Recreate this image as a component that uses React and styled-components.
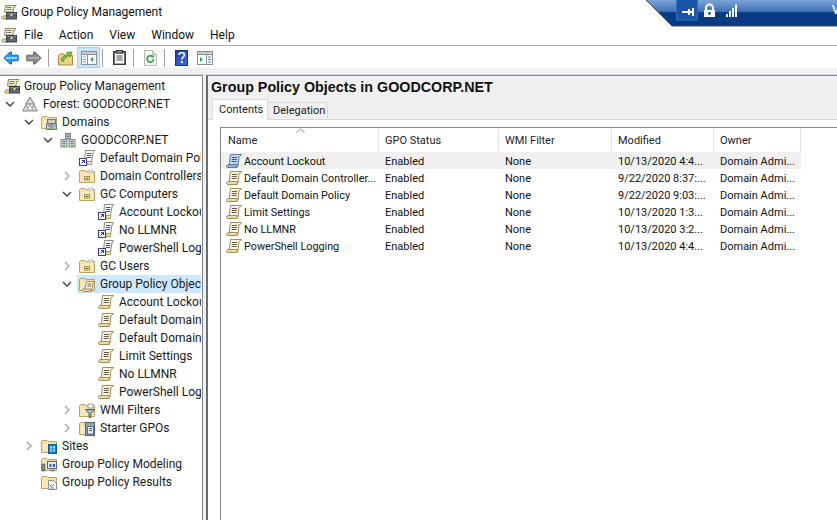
import React from 'react';
import styled, { createGlobalStyle } from 'styled-components';

const GlobalStyle = createGlobalStyle`
  html, body {
    margin: 0;
    padding: 0;
    background: #fff;
    overflow: hidden;
  }
  * { box-sizing: border-box; }
`;

const FONT = `Roboto, "Open Sans", sans-serif`;

const Page = styled.div`
  position: relative;
  width: 837px;
  height: 520px;
  display: flex;
  flex-direction: column;
  overflow: hidden;
  background: #fff;
  color: #1a1a1a;
  font-family: ${FONT};
  font-size: 12px;
`;

const TitleBar = styled.div`
  height: 24px;
  display: flex;
  align-items: center;
  gap: 4px;
  padding-left: 1px;
  color: #111;
`;

const MenuBar = styled.div`
  height: 21px;
  display: flex;
  align-items: center;
  padding-left: 1px;
  border-bottom: 1px solid #a6a6a6;
  box-sizing: content-box;
  color: #111;
`;

const MenuItems = styled.div`
  display: flex;
  gap: 16px;
  margin-left: 7px;
`;

const ToolBar = styled.div`
  height: 22px;
  display: flex;
  align-items: center;
  padding: 1px 0 0 3px;
`;

const ToolButton = styled.div`
  width: ${(p) => p.$w || 16}px;
  height: 21px;
  margin-right: ${(p) => p.$mr || 0}px;
  display: flex;
  align-items: center;
  justify-content: center;
  background: ${(p) => (p.$active ? '#cce4f7' : 'transparent')};
  border: ${(p) => (p.$active ? '1px solid #a8d0ee' : 'none')};
`;

const ToolSep = styled.div`
  width: 1px;
  height: 18px;
  background: #a0a0a0;
  margin: 0 ${(p) => p.$right || 10}px 0 ${(p) => p.$left || 6}px;
`;

const Band = styled.div`
  height: 7px;
  background: #f0f0f0;
  border-bottom: 1px solid #d8d8d8;
`;

const Panes = styled.div`
  flex: 1;
  display: flex;
  background: #f0f0f0;
  min-height: 0;
`;

const TreePane = styled.div`
  width: 203px;
  background: #fff;
  border-top: 1px solid #828790;
  border-right: 1px solid #828790;
  padding-top: 1px;
  overflow: hidden;
`;

const TreeRow = styled.div`
  height: 18px;
  display: flex;
  align-items: center;
  width: 201px;
  padding-left: ${(p) => (p.$root ? 2 : 3 + p.$level * 19)}px;
  overflow: hidden;
  white-space: nowrap;
`;

const Twist = styled.div`
  width: 14px;
  height: 18px;
  flex: none;
  margin-right: 3px;
  display: flex;
  align-items: center;
  justify-content: center;
`;

const TreeItem = styled.div`
  flex: 1;
  min-width: 0;
  height: 18px;
  display: flex;
  align-items: center;
  gap: ${(p) => (p.$tight ? 4 : 5)}px;
  padding-left: 2px;
  background: ${(p) => (p.$selected ? '#cce8ff' : 'transparent')};
  overflow: hidden;

  svg { flex: none; }
`;

const DetailPane = styled.div`
  flex: 1;
  margin-left: 3px;
  border-top: 1px solid #828790;
  border-left: 2px solid #6d6d6d;
  display: flex;
  flex-direction: column;
  min-width: 0;
`;

const DetailHead = styled.div`
  height: 43px;
  background: #f0f0f0;
  padding-left: 3px;
  display: flex;
  flex-direction: column;
  border-bottom: 1px solid #d9d9d9;
  box-sizing: content-box;
`;

const Heading = styled.div`
  font-family: "Liberation Sans", Arial, sans-serif;
  font-weight: bold;
  font-size: 14.3px;
  height: 22px;
  line-height: 23px;
  color: #111;
`;

const Tabs = styled.div`
  flex: 1;
  display: flex;
  align-items: flex-end;
  margin-bottom: -1px;
  margin-left: 1px;
`;

const Tab = styled.div`
  height: ${(p) => (p.$active ? 21 : 18)}px;
  width: ${(p) => p.$w}px;
  background: ${(p) => (p.$active ? '#fff' : '#f0f0f0')};
  border: 1px solid #d9d9d9;
  border-bottom: ${(p) => (p.$active ? 'none' : '1px solid #d9d9d9')};
  border-left: ${(p) => (p.$active ? '1px solid #d9d9d9' : 'none')};
  padding-left: ${(p) => (p.$active ? 6 : 5)}px;
  line-height: ${(p) => (p.$active ? 19 : 16)}px;
  font-size: 11px;
`;

const DetailBody = styled.div`
  flex: 1;
  background: #fff;
  padding: 7px 0 0 12px;
  min-height: 0;
`;

const ListView = styled.div`
  height: 100%;
  border-top: 1px solid #828790;
  border-left: 1px solid #828790;
  font-size: 11px;
`;

const COLUMNS = '158px 120px 113px 102px 87px';

const ListHeader = styled.div`
  display: grid;
  grid-template-columns: ${COLUMNS};
  height: 24px;
  width: 580px;
`;

const HeaderCell = styled.div`
  position: relative;
  border-right: 1px solid #e5e5e5;
  padding: 6px 0 0 ${(p) => (p.$first ? 7 : 6)}px;
  line-height: 14px;
  color: #222;
`;

const SortArrow = styled.svg`
  position: absolute;
  left: 75px;
  top: 0;
`;

const ListRow = styled.div`
  display: grid;
  grid-template-columns: ${COLUMNS};
  height: 17px;
  width: 580px;
  padding-top: 2px;
  align-items: center;
  background: ${(p) => (p.$selected ? '#f0f0f0' : 'transparent')};
  color: #111;
`;

const Cell = styled.div`
  padding-left: 6px;
  white-space: nowrap;
  overflow: hidden;
`;

const NameCell = styled.div`
  display: flex;
  align-items: center;
  gap: 2px;
  height: 15px;
  padding-left: 5px;
  white-space: nowrap;
  font-size: 10.8px;

  svg { flex: none; margin-top: -2px; }
`;

const ConnectionBar = styled.div`
  position: absolute;
  top: 0;
  right: 0;
  width: 191px;
  height: 27px;
`;

const ConnectionLabel = styled.div`
  position: absolute;
  left: 186px;
  top: 3px;
  color: #fff;
  font-size: 12px;
  text-shadow: 0 0 1px #c8b0ff;
`;

/* ---- icons ---- */

const Scroll = ({ blue }) => {
  const fill = blue ? '#c3d6ea' : '#fdf7e0';
  const dark = blue ? '#5a7da3' : '#a08d58';
  const roll = blue ? '#8fb0d2' : '#ecdca8';
  return (
    <svg width="16" height="16" viewBox="0 0 16 16">
      <path d="M4.500 1.500H15.500L14 3.500H13L12 13H3z" fill={fill} stroke={dark} />
      <path d="M.5 13.500C.5 12.300 1.500 11.500 3 11.500h8.500c-.5 1-.5 2-.2 3H2C1 14.500.5 14 .5 13.500z" fill={roll} stroke={dark} />
      <path d="M6 4.500h5M5.800 6.500h5M5.600 8.500h5" stroke={blue ? '#35567c' : '#5a5a5a'} />
    </svg>
  );
};

const ScrollLink = () => (
  <svg width="16" height="16" viewBox="0 0 16 16">
    <path d="M6.500.5H15.500L14 3 12.500 11.500H5.500z" fill="#fafaf6" stroke="#8c8c84" />
    <path d="M8 3.500h4.500M7.800 5.500h4.500M7.600 7.500h4.500" stroke="#555" />
    <path d="M8 11.500h5l-.5 3H8z" fill="#e9e0b8" stroke="#a59a70" />
    <rect x="0.500" y="8.500" width="7" height="7" fill="#fff" stroke="#3c3c8c" />
    <path d="M2.500 13.500l2.500-2.500M3 10.500h2.500V13" stroke="#2a2aa0" fill="none" />
  </svg>
);

const FolderBase = ({ children }) => (
  <>
    <path d="M.5 14.500V3.500L1.500 2.500H6L7 3.500h8.500v11z" fill="#f3dfa8" stroke="#bda260" />
    <path d="M1.500 5.500h13v8h-13z" fill="#f8e8ba" />
    {children}
  </>
);

const Folder = () => (
  <svg width="16" height="16" viewBox="0 0 16 16">
    <FolderBase>
      <rect x="9" y="2" width="4.500" height="2" fill="#eef3f8" stroke="#8fa9c0" strokeWidth=".6" />
      <rect x="5.500" y="8.500" width="5" height="3.500" fill="#e6cf88" stroke="#a8924e" />
      <path d="M7 10.500h2" stroke="#6f6030" />
    </FolderBase>
  </svg>
);

const FolderGpo = () => (
  <svg width="16" height="16" viewBox="0 0 16 16">
    <FolderBase>
      <path d="M7.500 5.500H15.500L14 7.500 13 13.500H5.500z" fill="#fdf8e4" stroke="#a08d58" />
      <path d="M4.500 15.500c-.8 0-1.500-.6-1.500-1.300s.7-1.200 1.500-1.200H12v2.500z" fill="#ecdca8" stroke="#a08d58" />
      <path d="M8.500 8h4M8.200 10h4" stroke="#666" />
    </FolderBase>
  </svg>
);

const FolderFilter = () => (
  <svg width="16" height="16" viewBox="0 0 16 16">
    <FolderBase>
      <rect x="9" y="2" width="5" height="4" fill="#f4f4f4" stroke="#888" strokeWidth=".7" />
      <path d="M6.500 7.500h9l-3.500 4V15.500H10V11.500z" fill="#a9b6c2" stroke="#55636f" />
    </FolderBase>
  </svg>
);

const FolderStarter = () => (
  <svg width="16" height="16" viewBox="0 0 16 16">
    <FolderBase>
      <rect x="6.500" y="2.500" width="9" height="13" fill="#8ea4b8" stroke="#4e5f70" />
      <rect x="8.500" y="6.500" width="6" height="7.500" fill="#dfe8f0" stroke="#56708a" />
      <path d="M10 8.500h3M10 10.500h3" stroke="#3a5a7a" />
    </FolderBase>
  </svg>
);

const FolderSites = () => (
  <svg width="16" height="16" viewBox="0 0 16 16">
    <FolderBase>
      <rect x="7.500" y="6.500" width="8" height="9" fill="#1c7fd0" stroke="#0d5da0" />
      <path d="M9 8.500h2v2H9zM12 8.500h2v2h-2zM9 11.500h2v2H9zM12 11.500h2v2h-2z" fill="#bfe4ff" />
    </FolderBase>
  </svg>
);

const FolderModeling = () => (
  <svg width="16" height="16" viewBox="0 0 16 16">
    <FolderBase>
      <rect x="1" y="8" width="3" height="7" fill="#7d8a94" stroke="#555" strokeWidth=".6" />
      <circle cx="2.500" cy="13" r=".8" fill="#49c24a" />
      <rect x="6.500" y="5.500" width="9" height="7" fill="#e4edf5" stroke="#5a6874" />
      <path d="M8.500 8h2v3h-2zM12 8h2v3h-2z" fill="#2e5f9c" />
      <path d="M9 14.500h5" stroke="#6b7883" strokeWidth="1.500" />
    </FolderBase>
  </svg>
);

const FolderResults = () => (
  <svg width="16" height="16" viewBox="0 0 16 16">
    <FolderBase>
      <path d="M7.500 6.500h5l3 3v6h-8z" fill="#f6f8fb" stroke="#7f8c99" />
      <path d="M9 11l1.500 1.500L13 10" fill="none" stroke="#3d7d55" />
      <path d="M9 14h4" stroke="#6f8090" />
    </FolderBase>
  </svg>
);

const Servers = () => (
  <svg width="16" height="16" viewBox="0 0 16 16">
    <rect x="5.500" y="1.500" width="5" height="5" fill="#c3ccd3" stroke="#7d8992" />
    <path d="M6.500 3h3M6.500 4.500h3" stroke="#6d7982" />
    <rect x="1" y="7.500" width="6" height="7.500" fill="#c8d1d8" stroke="#7d8992" />
    <rect x="9" y="7.500" width="6" height="7.500" fill="#c8d1d8" stroke="#7d8992" />
    <path d="M2.500 9.500h3M2.500 11.500h3M10.500 9.500h3M10.500 11.500h3" stroke="#6d7982" />
    <rect x="3" y="13" width="2" height="1.500" fill="#52c41a" />
    <rect x="11" y="13" width="2" height="1.500" fill="#52c41a" />
  </svg>
);

const DomainsFolder = () => (
  <svg width="16" height="16" viewBox="0 0 16 16">
    <FolderBase>
      <rect x="6.500" y="5.500" width="8" height="4" fill="#c3ccd3" stroke="#6f7b84" />
      <rect x="5.500" y="10" width="4.500" height="5.500" fill="#c8d1d8" stroke="#6f7b84" />
      <rect x="11" y="10" width="4.500" height="5.500" fill="#c8d1d8" stroke="#6f7b84" />
      <path d="M7 12h2M12.500 12h2" stroke="#666" />
      <rect x="7" y="14" width="1.500" height="1" fill="#52c41a" />
      <rect x="12.500" y="14" width="1.500" height="1" fill="#52c41a" />
    </FolderBase>
  </svg>
);

const ForestIcon = () => (
  <svg width="16" height="16" viewBox="0 0 16 16">
    <path d="M8 1L3.800 8h8.400z" fill="#d6d6d6" stroke="#7e7e7e" />
    <path d="M4 8.500L.8 15h6.800zM12 8.500L8.400 15h6.800z" fill="#e2e2e2" stroke="#7e7e7e" />
    <path d="M8 8.500L5 14h6z" fill="#fff" stroke="#a8a8a8" />
  </svg>
);

const AppIcon = () => (
  <svg width="16" height="16" viewBox="0 0 16 16">
    <path d="M4.500 1.500H15l-1.500 2H12.500L12 8H3.500z" fill="#f5edcf" stroke="#94855a" />
    <path d="M5.500 3.500h5M5.300 5.500h5" stroke="#777" />
    <path d="M.8 13.500c0-1 .6-1.500 1.500-1.500h4v3H2c-.7 0-1.200-.6-1.200-1.500z" fill="#e9dcae" stroke="#94855a" />
    <rect x="5.500" y="8.500" width="10" height="6.500" fill="#5f6a73" stroke="#3b444b" />
    <rect x="5.500" y="8.500" width="10" height="2.500" fill="#7b868f" stroke="#3b444b" />
    <rect x="9.500" y="10" width="2" height="2" fill="#e6d48a" />
  </svg>
);

const Chevron = ({ open }) =>
  open ? (
    <svg width="10" height="10" viewBox="0 0 10 10">
      <path d="M1 3l4 4 4-4" fill="none" stroke="#404040" strokeWidth="1.400" />
    </svg>
  ) : (
    <svg width="10" height="10" viewBox="0 0 10 10">
      <path d="M3 1l4 4-4 4" fill="none" stroke="#a6a6a6" strokeWidth="1.400" />
    </svg>
  );

const ArrowBack = () => (
  <svg width="16" height="14" viewBox="0 0 16 14">
    <path d="M.8 7L7 1h1.500v3.200h6.700v5.600H8.500V13H7z" fill="#2f9be8" stroke="#1668ad" strokeLinejoin="round" />
    <path d="M3 7h11" stroke="#8fd0fa" strokeWidth="2" />
  </svg>
);

const ArrowForward = () => (
  <svg width="16" height="14" viewBox="0 0 16 14">
    <path d="M15.200 7L9 1H7.500v3.200H.8v5.600h6.700V13H9z" fill="#8c8c8c" stroke="#666" strokeLinejoin="round" />
    <path d="M13 7H2" stroke="#aaa" strokeWidth="2" />
  </svg>
);

const UpFolder = () => (
  <svg width="15" height="16" viewBox="0 0 15 16">
    <path d="M.5 15V5.500L2 4h4l1 1.500h7.500V15z" fill="#ecd083" stroke="#a58a45" />
    <path d="M3 10C5 6 7 5 9.500 4.500L8.500 2.500 14 2l-2 5-1-1.500C8 7 6 8.500 5 12z" fill="#7cc243" stroke="#4d8a25" strokeWidth=".8" />
  </svg>
);

const PaneToggle = ({ right }) => (
  <svg width="16" height="14" viewBox="0 0 16 14">
    <rect x=".5" y=".5" width="15" height="13" fill="#fff" stroke="#8a8f94" />
    <rect x=".5" y=".5" width="15" height="3" fill="#c8ccd0" stroke="#8a8f94" />
    <path d="M13 2h1" stroke="#fff" />
    {right ? (
      <>
        <path d="M3 6l3 2.500L3 11z" fill="#2ea84a" />
        <path d="M9.500 3.500v10" stroke="#8a8f94" />
        <path d="M11 6h3M11 8.500h3M11 11h3" stroke="#3e7fb8" />
      </>
    ) : (
      <>
        <path d="M2 6h3M2 8.500h3M2 11h3" stroke="#8a9aa8" />
        <path d="M6.500 3.500v10" stroke="#8a8f94" />
        <path d="M12 6L9 8.500 12 11z" fill="#2ea84a" />
      </>
    )}
  </svg>
);

const Clipboard = () => (
  <svg width="13" height="15" viewBox="0 0 13 15">
    <rect x=".5" y="1.500" width="12" height="13" fill="#6a6a6a" stroke="#3a3a3a" />
    <rect x="2" y="3.500" width="9" height="10" fill="#f4f4f4" />
    <rect x="3.500" y=".5" width="6" height="2.500" fill="#9a9a9a" stroke="#3a3a3a" />
    <path d="M3.500 6h6M3.500 8h6M3.500 10h6" stroke="#555" />
  </svg>
);

const RefreshPage = () => (
  <svg width="13" height="16" viewBox="0 0 13 16">
    <path d="M.5.500h8l4 4v11H.5z" fill="#f7f7f7" stroke="#b5b5b5" />
    <path d="M8.500.500v4h4" fill="#e0e0e0" stroke="#b5b5b5" />
    <path d="M9.500 9a3.200 3.200 0 1 1-1-2.400" fill="none" stroke="#3ea745" strokeWidth="1.800" />
    <path d="M7 7.500l3 .2-.2-3z" fill="#3ea745" />
  </svg>
);

const HelpIcon = () => (
  <svg width="13" height="16" viewBox="0 0 13 16">
    <defs>
      <linearGradient id="helpFill" x1="0" y1="0" x2="1" y2="1">
        <stop offset="0" stopColor="#1f3f9c" />
        <stop offset="1" stopColor="#3f6fd8" />
      </linearGradient>
    </defs>
    <rect x=".5" y=".5" width="12" height="15" fill="url(#helpFill)" stroke="#1c2e78" />
    <path d="M4 5c0-3 5.500-3 5.500 0 0 2-2.700 2-2.700 4.500" fill="none" stroke="#fff" strokeWidth="1.600" />
    <rect x="5.800" y="11" width="2" height="2" fill="#fff" />
  </svg>
);

const BarShape = () => (
  <svg width="191" height="27" viewBox="0 0 191 27" style={{ display: 'block' }}>
    <defs>
      <linearGradient id="barFill" x1="0" y1="0" x2="0" y2="1">
        <stop offset="0" stopColor="#7ba3d8" />
        <stop offset="0.44" stopColor="#4272b4" />
        <stop offset="0.48" stopColor="#083c86" />
        <stop offset="1" stopColor="#063a84" />
      </linearGradient>
    </defs>
    <path d="M0 0H191V26H26z" fill="url(#barFill)" />
    <path d="M0 0L26 26H191" fill="none" stroke="#4a4a4a" />
    <rect x="30.500" y="-1" width="21" height="21" fill="#1a55a6" stroke="#2b6fcc" />
    <path d="M36 12h12" stroke="#fff" strokeWidth="2" />
    <path d="M47 8v8" stroke="#fff" strokeWidth="2" />
    <path d="M43 9v6" stroke="#fff" strokeWidth="2" />
    <path d="M60 10V8a3.500 3.500 0 0 1 7 0v2" fill="none" stroke="#fff" strokeWidth="2" />
    <path d="M58 10h11v7H58z" fill="#fff" />
    <rect x="62.500" y="12" width="2" height="3" fill="#0a3f87" />
    <path d="M80 14h2v3h-2zM83 11h2v6h-2zM86 8h2v9h-2zM89 4.500h2V17h-2z" fill="#fff" />
  </svg>
);

const treeRows = [
  { level: 0, open: true, icon: <ForestIcon />, label: 'Forest: GOODCORP.NET' },
  { level: 1, open: true, icon: <DomainsFolder />, label: 'Domains' },
  { level: 2, open: true, icon: <Servers />, label: 'GOODCORP.NET' },
  { level: 3, icon: <ScrollLink />, label: 'Default Domain Policy', leaf: true },
  { level: 3, icon: <Folder />, label: 'Domain Controllers' },
  { level: 3, open: true, icon: <Folder />, label: 'GC Computers' },
  { level: 4, icon: <ScrollLink />, label: 'Account Lockout', leaf: true },
  { level: 4, icon: <ScrollLink />, label: 'No LLMNR', leaf: true },
  { level: 4, icon: <ScrollLink />, label: 'PowerShell Logging', leaf: true },
  { level: 3, icon: <Folder />, label: 'GC Users' },
  { level: 3, open: true, icon: <FolderGpo />, label: 'Group Policy Objects', selected: true },
  { level: 4, icon: <Scroll />, label: 'Account Lockout', leaf: true },
  { level: 4, icon: <Scroll />, label: 'Default Domain Controllers Policy', leaf: true },
  { level: 4, icon: <Scroll />, label: 'Default Domain Policy', leaf: true },
  { level: 4, icon: <Scroll />, label: 'Limit Settings', leaf: true },
  { level: 4, icon: <Scroll />, label: 'No LLMNR', leaf: true },
  { level: 4, icon: <Scroll />, label: 'PowerShell Logging', leaf: true },
  { level: 3, icon: <FolderFilter />, label: 'WMI Filters' },
  { level: 3, icon: <FolderStarter />, label: 'Starter GPOs' },
  { level: 1, icon: <FolderSites />, label: 'Sites' },
  { level: 1, icon: <FolderModeling />, label: 'Group Policy Modeling', leaf: true },
  { level: 1, icon: <FolderResults />, label: 'Group Policy Results', leaf: true },
];

const columns = ['Name', 'GPO Status', 'WMI Filter', 'Modified', 'Owner'];

const gpos = [
  { name: 'Account Lockout', modified: '10/13/2020 4:4...' },
  { name: 'Default Domain Controller...', modified: '9/22/2020 8:37:...' },
  { name: 'Default Domain Policy', modified: '9/22/2020 9:03:...' },
  { name: 'Limit Settings', modified: '10/13/2020 1:3...' },
  { name: 'No LLMNR', modified: '10/13/2020 3:2...' },
  { name: 'PowerShell Logging', modified: '10/13/2020 4:4...' },
];

export default function App() {
  return (
    <Page>
      <GlobalStyle />
      <TitleBar>
        <AppIcon />
        Group Policy Management
      </TitleBar>
      <MenuBar>
        <AppIcon />
        <MenuItems>
          <span>File</span>
          <span>Action</span>
          <span>View</span>
          <span>Window</span>
          <span>Help</span>
        </MenuItems>
      </MenuBar>
      <ToolBar>
        <ToolButton $mr={7}><ArrowBack /></ToolButton>
        <ToolButton><ArrowForward /></ToolButton>
        <ToolSep $right={9} />
        <ToolButton $w={15} $mr={4}><UpFolder /></ToolButton>
        <ToolButton $w={23} $active><PaneToggle /></ToolButton>
        <ToolSep $left={2} />
        <ToolButton $w={13}><Clipboard /></ToolButton>
        <ToolSep $left={7} />
        <ToolButton $w={13}><RefreshPage /></ToolButton>
        <ToolSep $left={7} />
        <ToolButton $w={13} $mr={9}><HelpIcon /></ToolButton>
        <ToolButton><PaneToggle right /></ToolButton>
      </ToolBar>
      <Band />
      <Panes>
        <TreePane>
          <TreeRow $root>
            <TreeItem $tight>
              <AppIcon />
              Group Policy Management
            </TreeItem>
          </TreeRow>
          {treeRows.map((row, i) => (
            <TreeRow key={i} $level={row.level}>
              <Twist>{!row.leaf && <Chevron open={row.open} />}</Twist>
              <TreeItem $selected={row.selected}>
                {row.icon}
                {row.label}
              </TreeItem>
            </TreeRow>
          ))}
        </TreePane>
        <DetailPane>
          <DetailHead>
            <Heading>Group Policy Objects in GOODCORP.NET</Heading>
            <Tabs>
              <Tab $active $w={56}>Contents</Tab>
              <Tab $w={60}>Delegation</Tab>
            </Tabs>
          </DetailHead>
          <DetailBody>
            <ListView>
              <ListHeader>
                {columns.map((c, i) => (
                  <HeaderCell key={c} $first={i === 0}>
                    {i === 0 && (
                      <SortArrow width="9" height="5" viewBox="0 0 9 5">
                        <path d="M.5 4.500l4-3.500 4 3.500" fill="none" stroke="#8a8a8a" />
                      </SortArrow>
                    )}
                    {c}
                  </HeaderCell>
                ))}
              </ListHeader>
              {gpos.map((g, i) => (
                <ListRow key={g.name} $selected={i === 0}>
                  <NameCell>
                    <Scroll blue={i === 0} />
                    {g.name}
                  </NameCell>
                  <Cell>Enabled</Cell>
                  <Cell>None</Cell>
                  <Cell>{g.modified}</Cell>
                  <Cell>Domain Admi...</Cell>
                </ListRow>
              ))}
            </ListView>
          </DetailBody>
        </DetailPane>
      </Panes>
      <ConnectionBar>
        <BarShape />
        <ConnectionLabel>V</ConnectionLabel>
      </ConnectionBar>
    </Page>
  );
}
